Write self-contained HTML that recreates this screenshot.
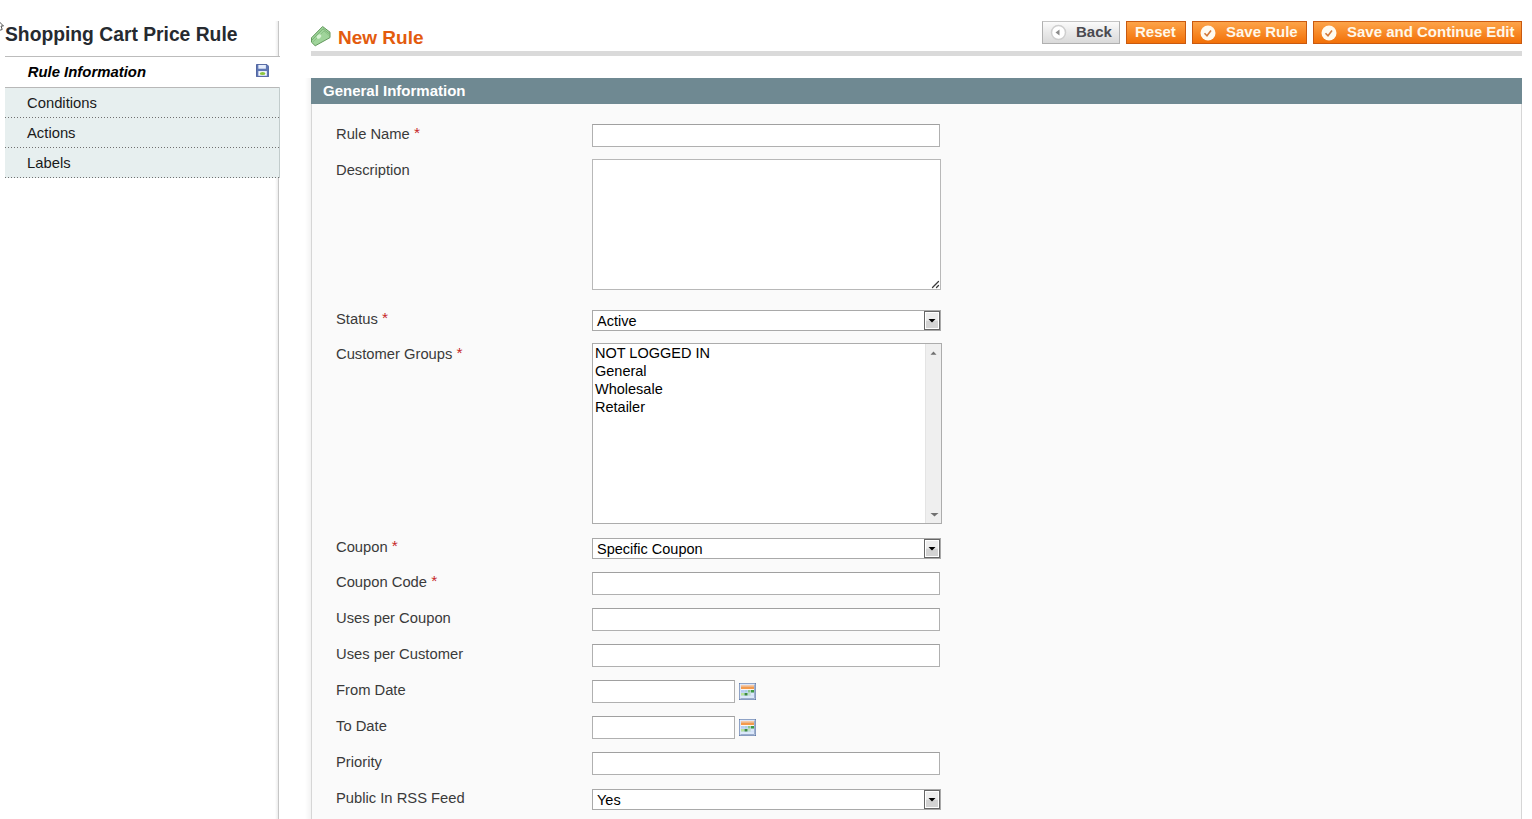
<!DOCTYPE html>
<html><head><meta charset="utf-8">
<style>
*{box-sizing:border-box;margin:0;padding:0}
html,body{width:1532px;height:819px;overflow:hidden;background:#fff}
body{position:relative;font-family:"Liberation Sans",sans-serif;font-size:15px;color:#2f2f2f}
.a{position:absolute}
.nw{white-space:nowrap}
svg{display:block}
/* sidebar */
#sideTitle{left:5px;top:22.5px;font-size:19.3px;font-weight:bold;color:#262a30;line-height:24px}
#sideHeadLine{left:5px;top:56px;width:275px;height:1px;background:#bcbcbc}
#sideVLine{left:275px;top:21px;width:5px;height:798px;background:linear-gradient(to right,rgba(230,230,230,0),#ececec 60%,#c6c6c6 60%,#c6c6c6 80%,#fff 80%)}
.tab{left:5px;width:275px;height:30px;line-height:30px;padding-left:22px;color:#1a1a1a;font-size:14.8px}
#tab0{top:57px;height:30px;font-size:14.9px;padding-left:22.7px;background:#fff;font-weight:bold;font-style:italic;color:#000}
#tab1{top:87px;height:31px;background:#e7efef;border-top:1px solid #b8b8b8;line-height:30px}
#tab2{top:118px;background:#e7efef;line-height:31px}
#tab3{top:148px;background:#e7efef;line-height:31px}
.tabR{left:279px;width:1px;background:#c2cccc}
.dots{left:5px;width:275px;height:1px;background-image:linear-gradient(to right,#707070 1px,transparent 1px);background-size:3px 1px}
/* content header */
#title{left:338px;top:26px;font-size:19px;font-weight:bold;color:#e35b0e;line-height:24px}
#bar{left:311px;top:51px;width:1211px;height:5px;background:#dadada}
.btn{top:21px;height:23px;line-height:21px;font-weight:bold;font-size:15px;color:#fff8ea}
.btn.o{background:linear-gradient(#fda449,#f88a28 50%,#f27008);border:1px solid #c95a10}
.btn span{position:absolute;top:-1px}
#bBack{left:1042px;width:78px;background:linear-gradient(#fbfbfb,#e9e9e9 50%,#dadada);border:1px solid #b0b0b0;border-top-color:#c4c4c4;color:#4a4a50}
/* fieldset */
#fhead{left:311px;top:78px;width:1211px;height:26px;background:#6f8992;color:#fff;font-weight:bold;line-height:26px;padding-left:12px}
#fbody{left:311px;top:104px;width:1211px;height:740px;background:#fafafa;border:1px solid #d6d6d6;border-top:0}
.lbl{left:336px;line-height:18px;color:#3a3a3a;font-size:14.75px}
.req{color:#c62828;position:relative;top:-1px;font-size:15.5px}
.inp{left:592px;width:348px;height:23px;background:#fff;border:1px solid #b0b0b0;border-top-color:#a0a0a0}
.sel{left:592px;width:349px;height:21px;background:#fff;border:1px solid #a9a9a9;color:#000;line-height:21px;padding-left:4px;font-size:14.5px}
.selbtn{position:absolute;right:0;top:0;width:16px;height:19px}
.ms{left:592px;top:343px;width:350px;height:181px;background:#fff;border:1px solid #acacac;color:#000;line-height:18px;padding:0 0 0 2px;font-size:14.5px}
</style></head>
<body>
<!-- cursor artifact -->
<svg class="a" style="left:0;top:18px" width="6" height="14" viewBox="0 0 6 14"><path d="M-3 1.5 L3.5 8 L1 8 L2.2 11.5 L-1 12.5" fill="#fff" stroke="#555" stroke-width="1"/></svg>

<div id="sideTitle" class="a nw">Shopping Cart Price Rule</div>
<div id="sideVLine" class="a"></div>
<div id="sideHeadLine" class="a"></div>
<div id="tab0" class="a tab nw">Rule Information</div>
<svg class="a" style="left:256px;top:64px" width="13.2" height="13.2" viewBox="0 0 14 14">
 <path d="M0.5 0.5 H11.5 L13.5 2.5 V13.5 H0.5 Z" fill="#5f77b5" stroke="#4a5f9c"/>
 <rect x="2.5" y="1" width="8" height="4" fill="#e6eefc"/>
 <rect x="2.5" y="7.5" width="9" height="5" fill="#f4f8ff"/>
 <ellipse cx="7" cy="10" rx="3" ry="1.6" fill="#8cc63e"/>
</svg>
<div id="tab1" class="a tab nw">Conditions</div>
<div id="tab2" class="a tab nw">Actions</div>
<div id="tab3" class="a tab nw">Labels</div>
<div class="a tabR" style="top:87px;height:91px"></div>
<div class="a dots" style="top:117px"></div>
<div class="a dots" style="top:147px"></div>
<div class="a dots" style="top:177px"></div>

<!-- content header -->
<svg class="a" style="left:310px;top:25px" width="22" height="22" viewBox="0 0 22 22">
 <path d="M1.5 12.8 L12.6 1.5 L20 7.2 L20 12.6 L5.2 20.8 L1.5 17.2 Z" fill="#9fd49a" stroke="#62985d" stroke-width="1" stroke-linejoin="round"/>
 <path d="M2 15 L13 3.8 L19.5 9" fill="none" stroke="#6fa86a" stroke-width="0.8"/>
 <path d="M3 17 L14 6 L19.5 11" fill="none" stroke="#7cb377" stroke-width="0.6"/>
 <ellipse cx="9" cy="11.5" rx="2.6" ry="1.8" transform="rotate(-40 9 11.5)" fill="#d6f2d2"/>
</svg>
<div id="title" class="a nw">New Rule</div>
<div id="bar" class="a"></div>

<div id="bBack" class="a btn nw"><svg class="a" style="left:7px;top:1.5px" width="17" height="17" viewBox="0 0 17 17"><circle cx="8.5" cy="8.5" r="7" fill="#fff" stroke="#cfcfcf" stroke-width="1.5"/><path d="M5.5 8.5 L9.5 5.5 V11.5 Z" fill="#8a8a8a"/></svg><span style="left:33px;letter-spacing:0px">Back</span></div>
<div id="bReset" class="a btn o nw" style="left:1126px;width:60px"><span style="left:8px">Reset</span></div>
<div id="bSave" class="a btn o nw" style="left:1192px;width:115px"><svg class="a" style="left:7px;top:3px" width="16" height="16" viewBox="0 0 16 16"><circle cx="8" cy="8" r="7.5" fill="#fffbf0"/><path d="M4.5 8.2 L7 10.8 L11 5.5" fill="none" stroke="#d27a3c" stroke-width="1.6"/></svg><span style="left:33px">Save Rule</span></div>
<div id="bSaveC" class="a btn o nw" style="left:1313px;width:209px"><svg class="a" style="left:7px;top:3px" width="16" height="16" viewBox="0 0 16 16"><circle cx="8" cy="8" r="7.5" fill="#fffbf0"/><path d="M4.5 8.2 L7 10.8 L11 5.5" fill="none" stroke="#d27a3c" stroke-width="1.6"/></svg><span style="left:33px">Save and Continue Edit</span></div>

<!-- fieldset -->
<div class="a" style="left:305px;top:78px;width:6px;height:741px;background:linear-gradient(to right,rgba(240,240,240,0),#f3f3f3)"></div>
<div id="fbody" class="a"></div>
<div id="fhead" class="a nw">General Information</div>

<div class="a lbl nw" style="top:125px">Rule Name <span class="req">*</span></div>
<div class="a inp" style="top:124px"></div>
<div class="a lbl nw" style="top:161px">Description</div>
<div class="a inp" style="top:159px;width:349px;height:131px;border-color:#b8b8b8"></div>
<svg class="a" style="left:931px;top:280px" width="9" height="9" viewBox="0 0 9 9"><path d="M1.5 7.5 L7.5 1.5 M5.5 7.5 L7.5 5.5" stroke="#3a3a3a" stroke-width="1.3" stroke-linecap="round"/></svg>
<div class="a lbl nw" style="top:310px">Status <span class="req">*</span></div>
<div class="a sel nw" style="top:310px">Active<svg class="selbtn" width="16" height="19" viewBox="0 0 16 19"><rect x="0.5" y="0.5" width="15" height="18" fill="#fff" stroke="#666"/><rect x="2" y="2" width="12" height="7.5" fill="#ededed"/><rect x="2" y="9.5" width="12" height="7.5" fill="#d3d3d3"/><path d="M4.5 8 H11.5 L8 11.5 Z" fill="#000"/></svg></div>
<div class="a lbl nw" style="top:345px">Customer Groups <span class="req">*</span></div>
<div class="a ms nw">NOT LOGGED IN<br>General<br>Wholesale<br>Retailer
 <div class="a" style="left:332px;top:0;width:16px;height:179px;background:#efefef;border-left:1px solid #e4e4e4"></div>
 <svg class="a" style="left:334px;top:5px" width="12" height="8" viewBox="0 0 12 8"><path d="M3.5 5.8 L6.5 2.6 L9.5 5.8 Z" fill="#707070"/></svg>
 <svg class="a" style="left:335px;top:167px" width="12" height="8" viewBox="0 0 12 8"><path d="M2.5 2 H10.5 L6.5 5.5 Z" fill="#707070"/></svg>
</div>
<div class="a lbl nw" style="top:538px">Coupon <span class="req">*</span></div>
<div class="a sel nw" style="top:538px">Specific Coupon<svg class="selbtn" width="16" height="19" viewBox="0 0 16 19"><rect x="0.5" y="0.5" width="15" height="18" fill="#fff" stroke="#666"/><rect x="2" y="2" width="12" height="7.5" fill="#ededed"/><rect x="2" y="9.5" width="12" height="7.5" fill="#d3d3d3"/><path d="M4.5 8 H11.5 L8 11.5 Z" fill="#000"/></svg></div>
<div class="a lbl nw" style="top:573px">Coupon Code <span class="req">*</span></div>
<div class="a inp" style="top:572px"></div>
<div class="a lbl nw" style="top:609px">Uses per Coupon</div>
<div class="a inp" style="top:608px"></div>
<div class="a lbl nw" style="top:645px">Uses per Customer</div>
<div class="a inp" style="top:644px"></div>
<div class="a lbl nw" style="top:681px">From Date</div>
<div class="a inp" style="top:680px;width:143px"></div>
<svg class="a cal" style="left:739px;top:683px" width="17" height="17" viewBox="0 0 17 17"><g>
   <rect x="0.5" y="0.5" width="16" height="16" fill="#cddcf6" stroke="#4a6aa0"/><path d="M16 1 V16 H1" fill="none" stroke="#3d5c93" stroke-width="1.4"/>
   <rect x="1" y="1" width="15" height="15" fill="none" stroke="#f4f8ff" stroke-width="0.8"/>
   <rect x="2" y="2" width="13" height="1.5" fill="#f7c9a4"/>
   <rect x="2" y="3.5" width="13" height="2.5" fill="#f39a4c"/>
   <rect x="2" y="6" width="13" height="1" fill="#fdf6f0"/>
   <rect x="2" y="7" width="3" height="2.5" fill="#b7cdf3"/><rect x="5.5" y="7" width="3" height="2.5" fill="#a9cfe6"/><rect x="9" y="7" width="2.5" height="2.5" fill="#8cc98c"/><rect x="12" y="7" width="3" height="2.5" fill="#3f9b45"/>
   <rect x="2" y="10" width="3" height="2.5" fill="#b6e39a"/><rect x="5.5" y="10" width="3" height="2.5" fill="#3d8c3d"/><rect x="9" y="10" width="2.5" height="2.5" fill="#bfe1c4"/><rect x="12" y="10" width="3" height="2.5" fill="#dbe7fb"/>
   <rect x="2" y="13" width="13" height="2" fill="#dbe8fb"/>
  </g></svg>
<div class="a lbl nw" style="top:717px">To Date</div>
<div class="a inp" style="top:716px;width:143px"></div>
<svg class="a cal" style="left:739px;top:719px" width="17" height="17" viewBox="0 0 17 17"><g>
   <rect x="0.5" y="0.5" width="16" height="16" fill="#cddcf6" stroke="#4a6aa0"/><path d="M16 1 V16 H1" fill="none" stroke="#3d5c93" stroke-width="1.4"/>
   <rect x="1" y="1" width="15" height="15" fill="none" stroke="#f4f8ff" stroke-width="0.8"/>
   <rect x="2" y="2" width="13" height="1.5" fill="#f7c9a4"/>
   <rect x="2" y="3.5" width="13" height="2.5" fill="#f39a4c"/>
   <rect x="2" y="6" width="13" height="1" fill="#fdf6f0"/>
   <rect x="2" y="7" width="3" height="2.5" fill="#b7cdf3"/><rect x="5.5" y="7" width="3" height="2.5" fill="#a9cfe6"/><rect x="9" y="7" width="2.5" height="2.5" fill="#8cc98c"/><rect x="12" y="7" width="3" height="2.5" fill="#3f9b45"/>
   <rect x="2" y="10" width="3" height="2.5" fill="#b6e39a"/><rect x="5.5" y="10" width="3" height="2.5" fill="#3d8c3d"/><rect x="9" y="10" width="2.5" height="2.5" fill="#bfe1c4"/><rect x="12" y="10" width="3" height="2.5" fill="#dbe7fb"/>
   <rect x="2" y="13" width="13" height="2" fill="#dbe8fb"/>
  </g></svg>
<div class="a lbl nw" style="top:753px">Priority</div>
<div class="a inp" style="top:752px"></div>
<div class="a lbl nw" style="top:789px">Public In RSS Feed</div>
<div class="a sel nw" style="top:789px">Yes<svg class="selbtn" width="16" height="19" viewBox="0 0 16 19"><rect x="0.5" y="0.5" width="15" height="18" fill="#fff" stroke="#666"/><rect x="2" y="2" width="12" height="7.5" fill="#ededed"/><rect x="2" y="9.5" width="12" height="7.5" fill="#d3d3d3"/><path d="M4.5 8 H11.5 L8 11.5 Z" fill="#000"/></svg></div>


</body></html>
